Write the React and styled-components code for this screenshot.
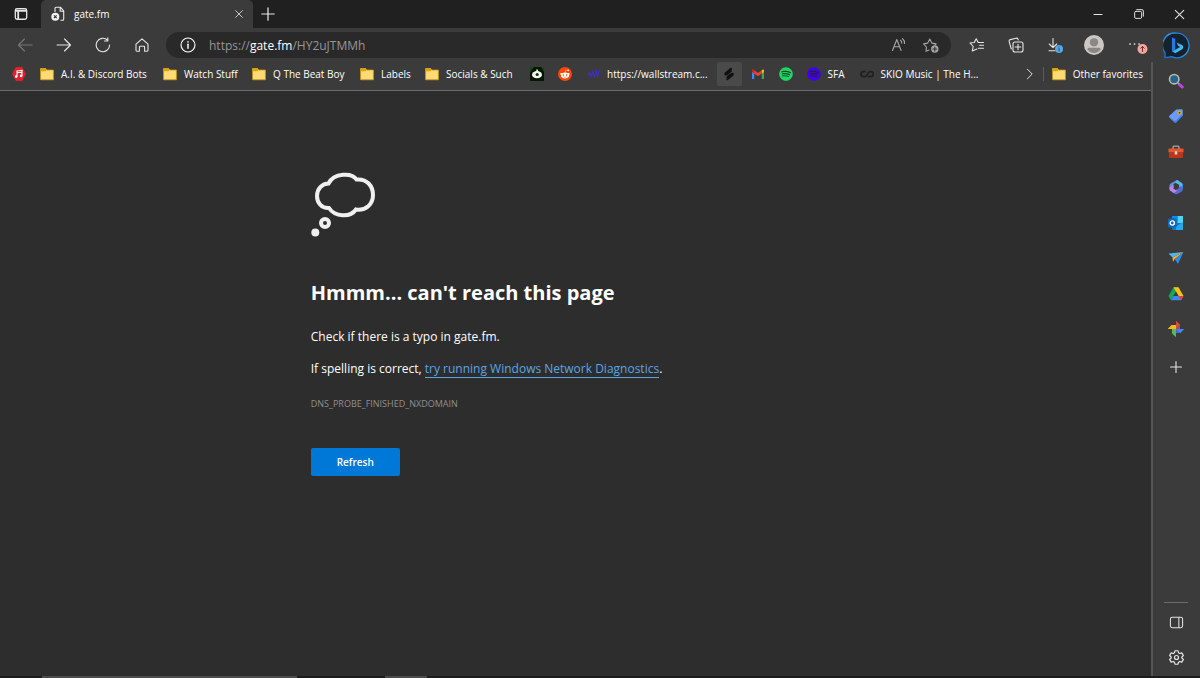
import { useState } from "react";
import styled, { createGlobalStyle } from "styled-components";
import { FaRedditAlien, FaSpotify } from "react-icons/fa";

const GlobalStyle = createGlobalStyle`
    * { box-sizing: border-box; }
    body {
        margin: 0;
        background: #2d2d2d;
        color: #fff;
        font-family: "Open Sans", "Noto Sans", sans-serif;
        font-size: 10px;
    }
    button, input { font-family: inherit; }
    svg { display: block; flex: none; }
`

const Window = styled.div`
    display: flex;
    flex-direction: column;
    min-height: 100vh;
`
const TitleBar = styled.header`
    display: flex;
    align-items: stretch;
    height: 28px;
    background: #202020;
`
const IconButton = styled.button`
    display: flex;
    flex: none;
    align-items: center;
    justify-content: center;
    width: ${(p) => p.$width || 39}px;
    height: 28px;
    padding: 0;
    border: 0;
    background: transparent;
    color: ${(p) => p.$color || "#e6e6e6"};
`
const Tab = styled.div`
    display: flex;
    align-items: center;
    width: 212px;
    padding-left: 10px;
    border-radius: 5px 5px 0 0;
    background: #3b3b3b;
`
const TabTitle = styled.span`
    flex: 1;
    margin-left: 9px;
    font-size: 10px;
`
const Spacer = styled.div`
    flex: 1;
`
const Toolbar = styled.nav`
    display: flex;
    align-items: center;
    height: 34px;
    padding-left: 5px;
    background: #3b3b3b;
`
const Address = styled.div`
    display: flex;
    flex: 1;
    align-items: center;
    height: 26px;
    margin: 0 6px 0 5px;
    padding: 0 4px 0 14px;
    border-radius: 13px;
    background: #292929;
`
const UrlBox = styled.div`
    position: relative;
    display: flex;
    flex: 1;
    align-items: center;
    height: 26px;
    margin-left: 13px;
    font-size: 12px;
`
const UrlText = styled.span`
    color: #969696;
    strong {
        color: #fff;
        font-weight: 400;
    }
`
const UrlInput = styled.input`
    position: absolute;
    inset: 0;
    width: 100%;
    padding: 0;
    border: 0;
    outline: 0;
    background: transparent;
    color: #fff;
    font-size: 12px;
`
const Body = styled.div`
    display: flex;
    flex: 1;
`
const Main = styled.div`
    display: flex;
    flex: 1;
    flex-direction: column;
    min-width: 0;
`
const Bookmarks = styled.nav`
    display: flex;
    align-items: center;
    gap: 14px;
    height: 29px;
    padding: 0 8px 4px 12px;
    border-bottom: 1px solid #6b6b6b;
    background: #3b3b3b;
`
const Bookmark = styled.a`
    display: flex;
    flex: none;
    align-items: center;
    gap: 7px;
    color: #fff;
    font-size: 10px;
    line-height: 16px;
    text-decoration: none;
    white-space: nowrap;
`
const BookmarkLabel = styled.span`
    min-width: ${(p) => p.$width}px;
`
const Highlight = styled(Bookmark)`
    justify-content: center;
    width: 25px;
    height: 24px;
    margin: 0 -5px;
    border-radius: 2px;
    background: #4a4a4a;
`
const Separator = styled.div`
    width: 1px;
    height: 14px;
    margin: 0 -6px 0 -9px;
    background: #5c5c5c;
`
const Page = styled.main`
    flex: 1;
    padding: 81px 27% 40px;
    background: #2d2d2d;
`
const Title = styled.h1`
    margin: 37px 0 0;
    font-size: 20px;
    font-weight: 700;
    line-height: 32px;
`
const Message = styled.p`
    margin: ${(p) => p.$top}px 0 0;
    font-size: 12px;
    line-height: 18px;
    white-space: nowrap;
`
const Link = styled.a`
    border-bottom: 1px solid #5ca5e0;
    color: #5ca5e0;
    text-decoration: none;
`
const ErrorCode = styled.p`
    margin: 20px 0 0;
    color: #8f8f8f;
    font-size: 9px;
    line-height: 12px;
`
const Refresh = styled.button`
    width: 89px;
    height: 28px;
    margin-top: 38px;
    border: 0;
    border-radius: 2px;
    background: #0078d7;
    color: #fff;
    font-size: 10px;
    font-weight: 600;
`
const Sidebar = styled.aside`
    display: flex;
    flex-direction: column;
    align-items: center;
    width: 49px;
    padding: 9px 1px 9px 0;
    border-left: 2px solid #555;
    background: #3b3b3b;
`
const Apps = styled.div`
    display: flex;
    flex-direction: column;
    justify-content: space-between;
    height: 268px;
    margin-bottom: 18px;
`
const SideButton = styled(IconButton)`
    width: 24px;
    height: 20px;
`
const Tools = styled.div`
    display: flex;
    flex-direction: column;
    align-items: center;
    gap: 15px;
    width: 24px;
    padding-top: 9px;
    border-top: 1px solid #6c6c6c;
`
const Taskbar = styled.footer`
    display: flex;
    height: 2px;
    padding-left: 42px;
    background: #1c1c1c;
`
const TaskItem = styled.div`
    width: ${(p) => p.$width}px;
    margin-right: 88px;
    background: #4c4c4c;
`

// thin outline icon, stroke follows the button colour
const Line = ({ size = 16, box = 16, children }) => (
    <svg width={size} height={size} viewBox={`0 0 ${box} ${box}`} fill="none" stroke="currentColor" strokeWidth="1.1" strokeLinecap="round" strokeLinejoin="round">
        {children}
    </svg>
)

const Folder = () => (
    <svg width="14" height="14" viewBox="0 0 14 14">
        <path d="M.6 1.5h5l1 1.5h6.8v9.8H.6z" fill="#ffda75" stroke="#c79a1c" strokeWidth=".8" />
        <path d="M.3 1.2h5.5l.8 1.6-1 1.5H.3z" fill="#dba511" />
    </svg>
)

const MusicIcon = () => (
    <svg width="14" height="14" viewBox="0 0 14 14">
        <path d="M4 .5h6L13.5 7 10 13.5H4L.5 7z" fill="#e2202c" stroke="#e2202c" strokeLinejoin="round" />
        <path d="M5 9.5V4l5-.7v5.4M5 5.8l5-.7" fill="none" stroke="#fff" strokeWidth="1.1" />
        <circle cx="4.2" cy="9.6" r="1.3" fill="#fff" />
        <circle cx="9.1" cy="8.9" r="1.3" fill="#fff" />
    </svg>
)

const RobotIcon = () => (
    <svg width="14" height="14" viewBox="0 0 14 14">
        <rect width="14" height="14" fill="#061606" />
        <path d="M0 0h4L0 6zM14 0v5l-3-5z" fill="#164817" />
        <ellipse cx="7" cy="7.7" rx="5" ry="3.6" fill="#f4fff2" />
        <path d="M6.3 2.5h1.6v2H6.3z" fill="#f4fff2" />
        <circle cx="7.2" cy="7.5" r="1.6" fill="#173217" />
    </svg>
)

const RedditIcon = () => (
    <svg width="14" height="14" viewBox="0 0 14 14">
        <circle cx="7" cy="7" r="7" fill="#ff4500" />
        <g color="#fff"><FaRedditAlien x="2" y="2" size={10} /></g>
    </svg>
)

const WaveIcon = () => (
    <svg width="14" height="14" viewBox="0 0 14 14">
        <path d="M1 8h1.2L3.8 5.5l1 4.5 2-6 1.4 6.8L10.2 3l1.2 7 1.8-7" fill="none" stroke="#3d2fc0" strokeWidth="1.1" />
    </svg>
)

const SpliceIcon = () => (
    <svg width="14" height="14" viewBox="0 0 14 14" fill="#111">
        <path d="M8.6.8q1.2-.5 1.2.8v2.2q0 .8-.7 1.3L6 7.5l3.6-1.6q2.2-.6 2.3 1.2 0 1.2-1 2l-5 4q-1.3.7-1.4-.6v-2q0-.8.7-1.4l3-2.3-3.7 1.6q-2 .6-2.2-1.2 0-1.3 1-2z" />
    </svg>
)

const GmailIcon = () => (
    <svg width="14" height="12" viewBox="0 0 14 12">
        <path d="M1 3v8h2.3V5z" fill="#4285f4" />
        <path d="M13 3v8h-2.3V5z" fill="#34a853" />
        <path d="M10.7 5.6V2.3L12 1.5q1-.2 1 1v1.4z" fill="#fbbc04" />
        <path d="M1 3.9V2.5q0-1.4 1.5-.8L7 5.1l3.7-2.8v3.3L7 8.3z" fill="#ea4335" />
        <path d="M1 3.9V2.5q0-1.2 1.2-1l1.1.8v3.3z" fill="#c5221f" />
    </svg>
)

const SpotifyIcon = ({ color, back }) => (
    <svg width="14" height="14" viewBox="0 0 14 14" color={color}>
        <circle cx="7" cy="7" r="6" fill={back} />
        <FaSpotify size={14} />
    </svg>
)

const SkioIcon = () => (
    <svg width="14" height="14" viewBox="0 0 14 14" fill="none" stroke="#202020" strokeWidth="1.8">
        <path d="M5.8 4.6H3.5a2.5 2.5 0 0 0 0 5H5c2.5 0 2.5-5 5-5h.8a2.5 2.5 0 0 1 0 5H8.2" />
    </svg>
)

const TabErrorIcon = () => (
    <svg width="14" height="16" viewBox="0 0 14 16">
        <path d="M4 6V2.3q0-1 1-1h4.5L12.7 5v8.2q0 1-1 1H9.5M9.2 1.5v3.8h3.5" fill="none" stroke="#ededed" strokeWidth="1.1" />
        <circle cx="4.3" cy="10.8" r="4" fill="#f4f4f4" />
        <path d="m2.9 9.4 2.8 2.8m0-2.8-2.8 2.8" stroke="#333" strokeWidth="1.1" />
    </svg>
)

const BingIcon = () => (
    <svg width="27" height="27" viewBox="0 0 28 28">
        <defs>
            <linearGradient id="ring" x1="0" y1="1" x2="1" y2="0">
                <stop stopColor="#1567d8" />
                <stop offset=".6" stopColor="#299ce8" />
                <stop offset="1" stopColor="#1767cf" />
            </linearGradient>
            <linearGradient id="bing" x1="0" y1="0" x2="1" y2="1">
                <stop stopColor="#2a7df0" />
                <stop offset="1" stopColor="#4be0e6" />
            </linearGradient>
        </defs>
        <path d="M14 1.2a12.8 12.8 0 1 1-5.2 24.4c-2.4.8-4.5 1-7 .8.7-1.7.6-3.2.2-5A12.8 12.8 0 0 1 14 1.2z" fill="#17212d" stroke="url(#ring)" strokeWidth="1.4" />
        <path d="m9.3 5.6 3.4 1.3v11.6L9.3 20z" fill="#2777e8" />
        <path d="m9.3 20 3.4 2.1 7.2-4.2q2-2.2 0-4.5l-5.8-2.6 1.4 3.5 2.2 1.3-5 2.9z" fill="url(#bing)" />
    </svg>
)

const Avatar = () => (
    <svg width="20" height="20" viewBox="0 0 20 20">
        <circle cx="10" cy="10" r="10" fill="#cac7c4" />
        <circle cx="10" cy="7.3" r="4.1" fill="#8b8784" />
        <path d="M3.5 14.2q0-1.4 1.4-1.4h10.2q1.4 0 1.4 1.4Q14.4 18 10 18t-6.5-3.8z" fill="#8b8784" />
    </svg>
)

const SearchIcon = () => (
    <svg width="16" height="16" viewBox="0 0 16 16">
        <path d="m10 10 1.8 1.8" stroke="#aaa" strokeWidth="1.8" />
        <path d="m11.8 11.8 2.4 2.2" stroke="#c342e8" strokeWidth="3" strokeLinecap="round" />
        <circle cx="6.2" cy="6.2" r="4.7" fill="#286589" stroke="#b9b9b3" strokeWidth="1.6" />
    </svg>
)

const TagIcon = () => (
    <svg width="16" height="16" viewBox="0 0 16 16">
        <path d="m8.2 1.6 5.5-.3q1 0 1 1l.2 5.2-6.6 6.8q-1 .8-2 0L1.4 9.6q-.8-1 0-1.8z" fill="#6b9af8" />
        <path d="m1.4 9.6 4.9 4.7q1 .8 2 0l6.6-6.8v-2L7.3 13z" fill="#4b79e7" />
        <circle cx="11.6" cy="4.8" r="1.5" fill="#444" stroke="#e0b70b" strokeWidth="1.1" />
    </svg>
)

const ToolboxIcon = () => (
    <svg width="16" height="16" viewBox="0 0 16 16">
        <path d="M5 5V3.2q0-1 1-1h4q1 0 1 1V5" fill="none" stroke="#a8a8a8" strokeWidth="1.3" />
        <path d="M1.5 4.5h13q1 0 1 1v3H.5v-3q0-1 1-1z" fill="#e7562c" />
        <path d="M1 8.5h14V13q0 1-1 1H2q-1 0-1-1z" fill="#bd3519" />
        <rect x="6.7" y="7.2" width="2.6" height="3.3" rx=".6" fill="#ded5ce" />
    </svg>
)

const OfficeIcon = () => (
    <svg width="16" height="16" viewBox="0 0 16 16">
        <path d="M9 1 3 4.2q-1.5.9-1.5 2.6v3.6l4-2V6q0-1 1-1.6L11 2z" fill="#7189dc" />
        <path d="m9 1 4.6 2.7q1.2.8 1.2 2.3v4l-3.7-2V5.8L7 3.5z" fill="#53b7e9" />
        <path d="M14.8 7v3.4q0 1.2-1 2L9.3 15q-1.2.5-2.3 0l-3-2 6-3.2q1-.6 1-1.7z" fill="#5968ce" />
        <path d="m1.5 8.3 4-2v3.4l3.7 2L6 14l-3.5-2q-1-.6-1-2z" fill="#bc86e5" />
    </svg>
)

const OutlookIcon = () => (
    <svg width="16" height="16" viewBox="0 0 16 16">
        <path d="M4 1h10q1 0 1 1v12q0 1-1 1H5q-1 0-1-1z" fill="#1276c9" />
        <path d="M9.5 1H15v7H9.5z" fill="#50d1f5" />
        <path d="M4 1h5.5v5H4z" fill="#168bd7" />
        <path d="m15 7-7 4.5V15h7z" fill="#29a8ea" />
        <rect y="3.5" width="8.6" height="9" rx="1" fill="#0869bd" />
        <circle cx="4.3" cy="8" r="2.1" fill="none" stroke="#fff" strokeWidth="1.4" />
    </svg>
)

const SendIcon = () => (
    <svg width="16" height="16" viewBox="0 0 16 16">
        <path d="M.5 3.5 15.5 2 4.5 7.5z" fill="#4cb5f2" />
        <path d="M15.5 2 10 14 6.7 9z" fill="#2e86e8" />
        <path d="M4.5 7.5 15.5 2 6.7 9 5 12z" fill="#f5b31c" />
    </svg>
)

const DriveIcon = () => (
    <svg width="16" height="16" viewBox="0 0 16 16">
        <path d="M5.5 1.3h5L8 5.7 3 14.3.5 10z" fill="#19a45a" />
        <path d="M5.5 1.3h5l5 8.7h-5z" fill="#fbc117" />
        <path d="M5.5 10h10L13 14.3H3z" fill="#4285f4" />
        <path d="M10.5 10h5L13 14.3z" fill="#e84335" />
        <path d="m8 5.8 2.4 4.2H5.6z" fill="#3b3b3b" />
    </svg>
)

const PhotosIcon = () => (
    <svg width="18" height="18" viewBox="0 0 18 18">
        <path d="M9 9V.8l4 3.8V9z" fill="#df4a3d" />
        <path d="M9 9h8.3l-3.8 4H9z" fill="#4285f4" />
        <path d="M9 9v8.2l-4-3.7V9z" fill="#5bb65c" />
        <path d="M9 9H.7l3.8-4H9z" fill="#f9b913" />
        <path d="m9 9 4-4.4V9zM9 9l4.5 4H9z" fill="#274f9f" opacity=".35" />
    </svg>
)

const Thought = () => (
    <svg width="66" height="68" viewBox="0 0 66 68" fill="none" stroke="#f0f0f0">
        <path d="M17.5 11.5C23 .5 41 .5 45.5 7.5 56 6.5 62 14 62 23S55 39 45 37.5C39 46 24 45 18 36 11 36.5 6 31 6 24S11 11.5 17.5 11.5z" strokeWidth="4" />
        <circle cx="14" cy="51" r="4" strokeWidth="4" />
        <circle cx="4.3" cy="60.5" r="4" fill="#f0f0f0" stroke="none" />
    </svg>
)

const Plus = ({ size }) => <Line size={size}><path d="M8 2.5v11M2.5 8h11" /></Line>

const Cross = ({ size }) => <Line size={size}><path d="m3.5 3.5 9 9m0-9-9 9" /></Line>

const sideApps = [
    ["Search", <SearchIcon />],
    ["Shopping", <TagIcon />],
    ["Tools", <ToolboxIcon />],
    ["Microsoft 365", <OfficeIcon />],
    ["Outlook", <OutlookIcon />],
    ["Drop", <SendIcon />],
    ["Drive", <DriveIcon />],
    ["Photos", <PhotosIcon />],
]

const bookmarks = [
    { name: "Music", icon: <MusicIcon /> },
    { label: "A.I. & Discord Bots", icon: <Folder />, width: 88 },
    { label: "Watch Stuff", icon: <Folder />, width: 54 },
    { label: "Q The Beat Boy", icon: <Folder />, width: 73 },
    { label: "Labels", icon: <Folder />, width: 30 },
    { label: "Socials & Such", icon: <Folder />, width: 70 },
    { name: "Robot", icon: <RobotIcon /> },
    { name: "Reddit", icon: <RedditIcon /> },
    { label: "https://wallstream.c...", icon: <WaveIcon />, width: 100 },
    { name: "Splice", icon: <SpliceIcon />, active: true },
    { name: "Gmail", icon: <GmailIcon /> },
    { name: "Spotify", icon: <SpotifyIcon color="#1ed760" back="#164c29" /> },
    { label: "SFA", icon: <SpotifyIcon color="#4100f5" back="#222" />, width: 18 },
    { label: "SKIO Music | The H...", icon: <SkioIcon />, width: 97 },
]

const App = () => {
    const [url, setUrl] = useState("https://gate.fm/HY2uJTMMh");
    const [editing, setEditing] = useState(false);

    return (
        <Window>
            <GlobalStyle />
            <TitleBar>
                <IconButton $width={41} aria-label="Tab actions">
                    <Line size={14}>
                        <rect x="1.5" y="2" width="13" height="12" rx="2" strokeWidth="1.5" />
                        <path d="M2 4.3h12M4.8 5v8.5" strokeWidth="2" />
                    </Line>
                </IconButton>
                <Tab>
                    <TabErrorIcon />
                    <TabTitle>gate.fm</TabTitle>
                    <IconButton $width={28} aria-label="Close tab"><Cross size={12} /></IconButton>
                </Tab>
                <IconButton $width={30} aria-label="New tab"><Plus size={18} /></IconButton>
                <Spacer />
                <IconButton $width={41} aria-label="Minimize"><Line><path d="M4 8.5h8" /></Line></IconButton>
                <IconButton $width={41} aria-label="Restore">
                    <Line size={14}>
                        <rect x="3" y="5" width="8" height="8" rx="1.5" />
                        <path d="M5.5 3h5.8Q13 3 13 4.7v5.8" />
                    </Line>
                </IconButton>
                <IconButton $width={41} aria-label="Close"><Cross size={15} /></IconButton>
            </TitleBar>

            <Toolbar>
                <IconButton $color="#777" aria-label="Back"><Line><path d="M15 8H1.5m6-6-6 6 6 6" /></Line></IconButton>
                <IconButton aria-label="Forward"><Line><path d="M1 8h13.5m-6-6 6 6-6 6" /></Line></IconButton>
                <IconButton aria-label="Reload"><Line><path d="M14.6 8a6.7 6.7 0 1 1-2.2-5M12.8.8V4H9.5" /></Line></IconButton>
                <IconButton aria-label="Home"><Line><path d="M2 7.2 8 1.8l6 5.4v6.1q0 .9-.9.9h-2.5V10q0-.8-.8-.8H6.2q-.8 0-.8.8v4.2H2.9q-.9 0-.9-.9z" /></Line></IconButton>
                <Address>
                    <Line><circle cx="8" cy="8" r="7" /><path d="M8 7.3v4" strokeWidth="1.4" /><circle cx="8" cy="4.8" r=".3" /></Line>
                    <UrlBox>
                        {!editing && <UrlText>https://<strong>gate.fm</strong>/HY2uJTMMh</UrlText>}
                        <UrlInput
                            aria-label="Address"
                            value={editing ? url : ""}
                            onFocus={() => setEditing(true)}
                            onBlur={() => setEditing(false)}
                            onChange={(event) => setUrl(event.target.value)}
                        />
                    </UrlBox>
                    <IconButton $width={32} $color="#a5a5a5" aria-label="Read aloud">
                        <Line><path d="m1.5 13.5 4.3-11 4.3 11M3 9.8h5.6M9.5 3.3q1.3 1 1.3 2.8M11.5 1.7q2.2 1.7 2 4.8" /></Line>
                    </IconButton>
                    <IconButton $width={32} $color="#a5a5a5" aria-label="Add favorite">
                        <Line>
                            <path d="m6 13-3 1.2.4-4.2-2.8-3.1 4.1-.8L6.8 2l2 4.1 4.3.8-1.2 1.3" />
                            <circle cx="11.8" cy="12" r="3.7" fill="currentColor" stroke="none" />
                            <path d="M9.9 12h3.8m-1.9-1.9v3.8" stroke="#333" />
                        </Line>
                    </IconButton>
                </Address>
                <IconButton aria-label="Favorites">
                    <Line><path d="M8 12 3.3 14l.9-4.5L1 6l4.3-.5L7.2 1.8l2 3.7h5.3M10.5 8.3h4M9.5 11.2h5" /></Line>
                </IconButton>
                <IconButton aria-label="Collections">
                    <Line><rect x="5" y="5" width="10" height="10" rx="2" /><path d="M10 7.2v5.6M7.2 10h5.6M3.3 12 1.2 4.6q-.4-1.5 1-2L8 1.2q1.5-.3 2 1l.2.8" /></Line>
                </IconButton>
                <IconButton aria-label="Downloads">
                    <Line>
                        <path d="M6 1.5v9M2.3 7 6 10.7 9.7 7M2 13.8h6" />
                        <circle cx="12" cy="12" r="4" fill="#55a9e8" stroke="none" />
                        <path d="M12 11.5v2.3m0-4v.1" stroke="#24506f" />
                    </Line>
                </IconButton>
                <IconButton aria-label="Profile"><Avatar /></IconButton>
                <IconButton aria-label="Settings and more">
                    <svg width="30" height="18" viewBox="0 0 30 18">
                        <path d="M12 8h.1m4.4 0h.1m4.4 0h.1" stroke="#e6e6e6" strokeWidth="1.7" strokeLinecap="round" />
                        <circle cx="24.5" cy="13" r="5" fill="#f3a6a0" />
                        <path d="M24.5 16v-5.5m-2 2 2-2 2 2" fill="none" stroke="#6c302c" />
                    </svg>
                </IconButton>
                <IconButton $width={48} aria-label="Discover"><BingIcon /></IconButton>
            </Toolbar>

            <Body>
                <Main>
                    <Bookmarks>
                        {bookmarks.map((b) => {
                            const Item = b.active ? Highlight : Bookmark;
                            return (
                                <Item key={b.label || b.name} href="#" aria-label={b.name}>
                                    {b.icon}
                                    {b.label && <BookmarkLabel $width={b.width}>{b.label}</BookmarkLabel>}
                                </Item>
                            )
                        })}
                        <Spacer />
                        <IconButton $width={16} aria-label="More bookmarks"><Line size={14}><path d="m5 2.5 5.5 5.5L5 13.5" /></Line></IconButton>
                        <Separator />
                        <Bookmark href="#"><Folder /><BookmarkLabel $width={70}>Other favorites</BookmarkLabel></Bookmark>
                    </Bookmarks>
                    <Page>
                        <Thought />
                        <Title>Hmmm... can't reach this page</Title>
                        <Message $top={19}>Check if there is a typo in gate.fm.</Message>
                        <Message $top={14}>If spelling is correct, <Link href="#">try running Windows Network Diagnostics</Link>.</Message>
                        <ErrorCode>DNS_PROBE_FINISHED_NXDOMAIN</ErrorCode>
                        <Refresh>Refresh</Refresh>
                    </Page>
                </Main>
                <Sidebar>
                    <Apps>
                        {sideApps.map(([name, icon]) => <SideButton key={name} aria-label={name}>{icon}</SideButton>)}
                    </Apps>
                    <SideButton aria-label="Add app"><Plus /></SideButton>
                    <Spacer />
                    <Tools>
                        <SideButton aria-label="Hide sidebar"><Line size={15}><rect x="1.5" y="2.5" width="13" height="11" rx="2" /><path d="M10.5 3v10" /></Line></SideButton>
                        <SideButton aria-label="Settings">
                            <Line size={17} box={24}>
                                <path strokeWidth="1.7" d="M9.8 2.5h4.4l.7 2.9 1.7 1 2.9-.9 2.2 3.8-2.2 2v1.4l2.2 2-2.2 3.8-2.9-.9-1.7 1-.7 2.9H9.8l-.7-2.9-1.7-1-2.9.9-2.2-3.8 2.2-2v-1.4l-2.2-2 2.2-3.8 2.9.9 1.7-1z" />
                                <circle cx="12" cy="12" r="2.8" strokeWidth="1.7" />
                            </Line>
                        </SideButton>
                    </Tools>
                </Sidebar>
            </Body>
            <Taskbar>
                <TaskItem $width={255} />
                <TaskItem $width={42} />
            </Taskbar>
        </Window>
    )
}

export default App;
